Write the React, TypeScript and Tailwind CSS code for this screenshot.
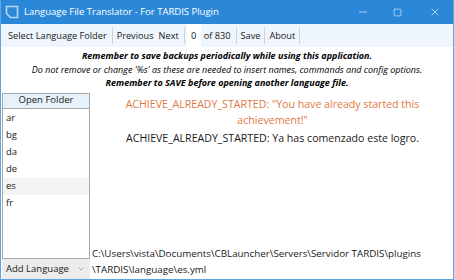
import { ChevronDown, Minus, Square, X } from 'lucide-react'

const LANGUAGES = ['ar', 'bg', 'da', 'de', 'es', 'fr']

function Sep() {
    return <div className="w-px self-stretch my-[3px] bg-[#c9d3de]" />
}

export default function App() {
    return (
        <div
            className="w-[454px] h-[280px] flex flex-col bg-white border-x border-b border-[#5fa3e3] overflow-hidden text-[#1a1a1a]"
            style={{ fontFamily: '"Open Sans", "Noto Sans", sans-serif' }}
        >
            {/* Title bar */}
            <div className="h-[24px] shrink-0 bg-[#2b88d8] flex items-center text-white -mx-px">
                <svg width="16" height="16" viewBox="0 0 16 16" className="ml-[4px] mr-[4px]">
                    <path d="M2.5 2.5 H13.5 V13.5 H6.5 L2.5 9.5 Z" fill="none" stroke="#b9d8f3" strokeWidth="1.6" strokeLinejoin="round" />
                </svg>
                <span className="text-[9.5px] leading-none">Language File Translator - For TARDIS Plugin</span>
                <div className="ml-auto flex items-center h-full">
                    <div className="w-[35px] flex justify-center"><Minus size={12} strokeWidth={1.2} /></div>
                    <div className="w-[35px] flex justify-center"><Square size={9} strokeWidth={1.4} /></div>
                    <div className="w-[39px] flex justify-center"><X size={12} strokeWidth={1.2} /></div>
                </div>
            </div>

            {/* Menu bar */}
            <div className="h-[23px] shrink-0 bg-[#eef5fc] flex items-stretch text-[9.2px] pl-[7px]">
                <span className="flex items-center pr-[5px]">Select Language Folder</span>
                <Sep />
                <span className="flex items-center pl-[4px] pr-[5px]">Previous</span>
                <span className="flex items-center pr-[5px]">Next</span>
                <Sep />
                <span className="flex items-center justify-center bg-white w-[14px] ml-[2px]">0</span>
                <span className="flex items-center pl-[3px] pr-[5px]">of 830</span>
                <Sep />
                <span className="flex items-center pl-[4px] pr-[4px]">Save</span>
                <Sep />
                <span className="flex items-center pl-[4px] pr-[4px]">About</span>
                <Sep />
            </div>

            {/* Notes */}
            <div className="flex flex-col items-center text-[9px] leading-[13.5px] italic pt-[2px] text-black">
                <p className="font-bold">Remember to save backups periodically while using this application.</p>
                <p>Do not remove or change '%s' as these are needed to insert names, commands and config options.</p>
                <p className="font-bold">Remember to SAVE before opening another language file.</p>
            </div>

            {/* Main */}
            <div className="flex flex-1 min-h-0 pt-[3px]">
                <div className="w-[88px] shrink-0 ml-px flex flex-col text-[9.5px]">
                    <div className="h-[16px] border border-[#a8a8a8] bg-[#e5f1fb] flex items-center justify-center">
                        Open Folder
                    </div>
                    <div className="flex-1 border-x border-b border-[#a8a8a8] pt-[1px]">
                        {LANGUAGES.map(lang => (
                            <div
                                key={lang}
                                className={`h-[17px] flex items-center px-[3px] ${lang === 'es' ? 'bg-[#f3f3f3]' : ''}`}
                            >
                                {lang}
                            </div>
                        ))}
                    </div>
                    <div className="h-[20px] shrink-0 bg-[#ececec] flex items-center pl-[4px] pr-[5px] text-[9.5px]">
                        <span>Add Language</span>
                        <ChevronDown size={8} className="ml-auto text-[#808080]" />
                    </div>
                </div>

                <div className="flex-1 flex flex-col pl-[2px]">
                    <div className="flex flex-col items-center text-center text-[10.6px] leading-[16px] pt-[3px] px-[20px]">
                        <p className="text-[#e2783f]">ACHIEVE_ALREADY_STARTED: "You have already started this achievement!"</p>
                        <p className="mt-[2px] text-[#1a1a1a]">ACHIEVE_ALREADY_STARTED: Ya has comenzado este logro.</p>
                    </div>
                    <div className="mt-auto text-[9.8px] leading-[16px] pb-[1px]">
                        <p>C:\Users\vista\Documents\CBLauncher\Servers\Servidor TARDIS\plugins</p>
                        <p>\TARDIS\language\es.yml</p>
                    </div>
                </div>
            </div>
        </div>
    )
}
